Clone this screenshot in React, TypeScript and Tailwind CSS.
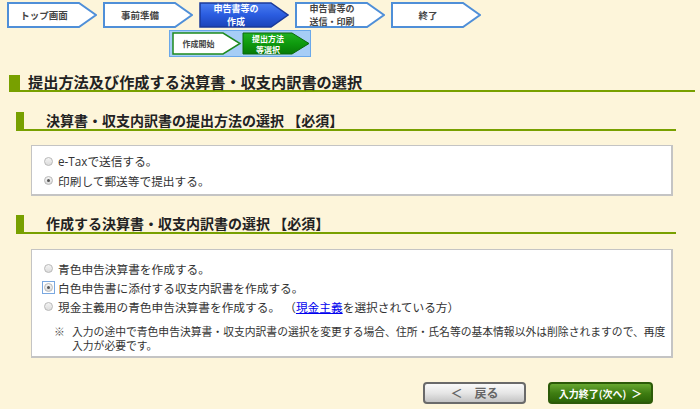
import React from "react";

const FONT = { fontFamily: '"Noto Sans CJK JP", "Noto Sans", sans-serif' };

type StepKind = "plain" | "current" | "subPlain" | "subCurrent";

function StepArrow({ kind, w, h }: { kind: StepKind; w: number; h: number }) {
  const tip = 18;
  const pts = `1,1 ${w - tip},1 ${w - 1},${h / 2} ${w - tip},${h - 1} 1,${h - 1}`;
  const styles: Record<StepKind, { fill: string; stroke: string; sw: number }> = {
    plain: { fill: "#ffffff", stroke: "#4f8fd8", sw: 2 },
    current: { fill: "url(#gBlue)", stroke: "#1a3a9a", sw: 1.5 },
    subPlain: { fill: "#ffffff", stroke: "#1e8a1e", sw: 1.5 },
    subCurrent: { fill: "url(#gGreen)", stroke: "#0a6a0a", sw: 1 },
  };
  const s = styles[kind];
  return (
    <svg width={w} height={h} className="absolute left-0 top-0">
      <defs>
        <linearGradient id="gBlue" x1="0" y1="0" x2="0" y2="1">
          <stop offset="0" stopColor="#4a7ef0" />
          <stop offset="0.5" stopColor="#2a5ce0" />
          <stop offset="1" stopColor="#1c44b8" />
        </linearGradient>
        <linearGradient id="gGreen" x1="0" y1="0" x2="0" y2="1">
          <stop offset="0" stopColor="#22b022" />
          <stop offset="0.5" stopColor="#0e9a0e" />
          <stop offset="1" stopColor="#077a07" />
        </linearGradient>
      </defs>
      <polygon points={pts} fill={s.fill} stroke={s.stroke} strokeWidth={s.sw} strokeLinejoin="miter" />
    </svg>
  );
}

function Step({ kind, lines, w, h }: { kind: StepKind; lines: string[]; w: number; h: number }) {
  const light = kind === "current" || kind === "subCurrent";
  const sub = kind === "subPlain" || kind === "subCurrent";
  const two = lines.length > 1;
  return (
    <div className="relative shrink-0" style={{ width: w, height: h }}>
      <StepArrow kind={kind} w={w} h={h} />
      <div
        className={`absolute left-0 top-0 flex h-full flex-col items-center justify-center font-bold ${
          light ? "text-white" : "text-[#444]"
        } ${
          sub
            ? "text-[8px] leading-[11px]"
            : two
            ? "text-[9px] leading-[13px]"
            : "text-[9.5px] leading-[13px]"
        }`}
        style={{ width: w - 16 }}
      >
        {lines.map((l) => (
          <span key={l} className="block">
            {l}
          </span>
        ))}
      </div>
    </div>
  );
}

function Heading({ text, big }: { text: string; big?: boolean }) {
  return (
    <div
      className={`flex items-end border-b-2 border-[#78a000] ${
        big ? "ml-[9px] w-[686px]" : "ml-[16px] w-[660px]"
      }`}
    >
      <div className={`${big ? "h-[15px] w-[11px]" : "h-[17px] w-[8px]"} shrink-0 bg-[#78a000]`} />
      <div
        className={`${
          big ? "ml-[8px] text-[15.2px] leading-[17px]" : "ml-[22px] text-[14px] leading-[17px]"
        } font-bold text-[#222] whitespace-nowrap`}
      >
        {text}
      </div>
    </div>
  );
}

function Radio({ checked, focus }: { checked?: boolean; focus?: boolean }) {
  return (
    <span
      className={`inline-flex h-[11px] w-[11px] shrink-0 items-center justify-center ${
        focus ? "outline outline-1 outline-[#7aa8e0]" : ""
      }`}
    >
      <span className="flex h-[9px] w-[9px] items-center justify-center rounded-full border border-[#b8b8b8] bg-gradient-to-b from-[#f4f4f4] to-[#dcdcdc]">
        {checked && <span className="h-[3px] w-[3px] rounded-full bg-[#555]" />}
      </span>
    </span>
  );
}

function Option({ checked, focus, children }: { checked?: boolean; focus?: boolean; children: React.ReactNode }) {
  return (
    <div className="flex h-[19px] items-center">
      <Radio checked={checked} focus={focus} />
      <span className="ml-[4px] whitespace-nowrap text-[11.7px] text-[#333]">{children}</span>
    </div>
  );
}

export default function App() {
  return (
    <div className="h-[409px] w-[700px] overflow-hidden bg-[#fdf5da]" style={FONT}>
      {/* progress steps */}
      <div className="flex gap-[6px] pl-[7px] pt-[2px]">
        <Step kind="plain" lines={["トップ画面"]} w={90} h={26} />
        <Step kind="plain" lines={["事前準備"]} w={90} h={26} />
        <Step kind="current" lines={["申告書等の", "作成"]} w={90} h={26} />
        <Step kind="plain" lines={["申告書等の", "送信・印刷"]} w={90} h={26} />
        <Step kind="plain" lines={["終了"]} w={90} h={26} />
      </div>
      <div className="ml-[169px] mt-[2px] flex h-[27px] w-[142px] items-center gap-[1px] border border-[#6aa8ea] bg-[#a6cdf6] pl-[2px]">
        <Step kind="subPlain" lines={["作成開始"]} w={69} h={23} />
        <Step kind="subCurrent" lines={["提出方法", "等選択"]} w={68} h={23} />
      </div>

      <div className="mt-[16px]">
        <Heading big text="提出方法及び作成する決算書・収支内訳書の選択" />
      </div>

      <div className="mt-[20px]">
        <Heading text="決算書・収支内訳書の提出方法の選択 【必須】" />
      </div>

      <div className="ml-[31px] mt-[14px] h-[51px] w-[642px] border border-[#c4c4c4] border-b-2 border-r-2 bg-white pl-[11px] pt-[6px]">
        <Option>
          <span style={{ fontFamily: '"Open Sans", "Noto Sans CJK JP", sans-serif' }}>e-Tax</span>で送信する。
        </Option>
        <Option checked>印刷して郵送等で提出する。</Option>
      </div>

      <div className="mt-[19px]">
        <Heading text="作成する決算書・収支内訳書の選択 【必須】" />
      </div>

      <div className="ml-[31px] mt-[15px] h-[109px] w-[642px] border border-[#c4c4c4] border-b-2 border-r-2 bg-white pl-[11px] pt-[9px]">
        <Option>青色申告決算書を作成する。</Option>
        <Option checked focus>
          白色申告書に添付する収支内訳書を作成する。
        </Option>
        <Option>
          現金主義用の青色申告決算書を作成する。
          <span className="ml-[10px]">
            （<a className="text-[#0000ee] underline">現金主義</a>を選択されている方）
          </span>
        </Option>
        <div className="mt-[8px] flex text-[10.8px] leading-[14px] text-[#333]">
          <span className="ml-[11px] w-[18px] shrink-0 text-[#555]">※</span>
          <span className="w-[595px]">
            入力の途中で青色申告決算書・収支内訳書の選択を変更する場合、住所・氏名等の基本情報以外は削除されますので、再度入力が必要です。
          </span>
        </div>
      </div>

      {/* navigation buttons */}
      <div className="ml-[423px] mt-[24px] flex gap-[22px]">
        <button className="flex h-[22px] w-[103px] items-center justify-center rounded-[4px] border-2 border-[#6a6a6a] bg-gradient-to-b from-[#fafafa] via-[#e6e6e6] to-[#c4c4c4] text-[12px] font-bold text-[#666]">
          <span className="mr-[12px]">＜</span>
          <span>戻る</span>
        </button>
        <button className="flex h-[22px] w-[105px] items-center justify-center rounded-[4px] border-2 border-[#2c5a08] bg-gradient-to-b from-[#68a830] via-[#3f7e12] to-[#2c6406] text-[10px] font-bold text-white">
          <span>入力終了(次へ)</span>
          <span className="ml-[5px] text-[11px]">＞</span>
        </button>
      </div>
    </div>
  );
}
